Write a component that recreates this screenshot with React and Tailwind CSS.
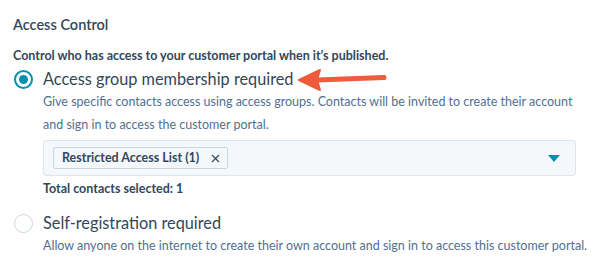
import React, { useState } from 'react';

const font = { fontFamily: 'Lato, "Open Sans", "Liberation Sans", sans-serif' };

const Radio = ({ checked, onClick }) => (
    <button
        type="button"
        onClick={onClick}
        className={`flex h-[19px] w-[19px] shrink-0 items-center justify-center rounded-full bg-white ${
            checked ? 'border-2 border-[#0091ae]' : 'border-[1.5px] border-[#cbd6e2]'
        }`}
    >
        {checked && <span className="h-[9px] w-[9px] rounded-full bg-[#0091ae]" />}
    </button>
);

const App = () => {
    const [access, setAccess] = useState('group');

    return (
        <div className="h-[267px] w-[600px] overflow-hidden bg-white pl-[13px] pt-[16px] text-[#33475b]" style={font}>
            <h2 className="text-[14.5px] font-semibold leading-[18px]">Access Control</h2>

            <p className="mt-[14px] text-[12.5px] font-bold leading-[16px] text-[#33475b]">
                Control who has access to your customer portal when it’s published.
            </p>

            {/* Access group option */}
            <div className="mt-[3px] flex h-[24px] items-center">
                <div className="ml-px">
                    <Radio checked={access === 'group'} onClick={() => setAccess('group')} />
                </div>
                <span className="ml-[10px] text-[16.3px] font-normal leading-[24px] text-[#33475b]">
                    Access group membership required
                </span>
                {/* annotation arrow */}
                <svg className="ml-[3px]" width="92" height="24" viewBox="0 0 92 24">
                    <path d="M 20 13 L 87 10.5" stroke="#ef5c3d" strokeWidth="5" strokeLinecap="round" fill="none" />
                    <path d="M 2 13 L 23 3 L 20 13 L 23 23 Z" fill="#ef5c3d" strokeLinejoin="round" stroke="#ef5c3d" strokeWidth="2" />
                </svg>
            </div>
            <p className="-mt-px ml-[30px] text-[12.5px] leading-[23px] text-[#516f90]">
                Give specific contacts access using access groups. Contacts will be invited to create their account
                <br />
                and sign in to access the customer portal.
            </p>

            {/* Access group select */}
            <div className="ml-[30px] mr-[24px] mt-[4px] flex h-[36px] items-center justify-between rounded-[3px] border border-[#dfe3eb] bg-[#f5f8fa] pl-[9px] pr-[15px]">
                <span className="flex h-[22px] items-center gap-[12px] rounded-[2px] border border-[#cbd6e2] bg-[#f5f8fa] pl-[8px] pr-[7px] text-[12.5px] font-bold text-[#33475b]">
                    Restricted Access List (1)
                    <svg width="9" height="9" viewBox="0 0 9 9">
                        <path d="M1 1 L8 8 M8 1 L1 8" stroke="#33475b" strokeWidth="1.2" />
                    </svg>
                </span>
                <svg width="12" height="7" viewBox="0 0 12 7">
                    <path d="M0 0 H12 L6 7 Z" fill="#0091ae" />
                </svg>
            </div>
            <p className="ml-[30px] mt-[5px] text-[12.5px] font-bold leading-[16px] text-[#33475b]">
                Total contacts selected: 1
            </p>

            {/* Self-registration option */}
            <div className="mt-[14px] flex h-[24px] items-center">
                <div className="ml-px">
                    <Radio checked={access === 'self'} onClick={() => setAccess('self')} />
                </div>
                <span className="ml-[10px] text-[16.3px] font-normal leading-[24px] text-[#33475b]">
                    Self-registration required
                </span>
            </div>
            <p className="ml-[30px] mt-px text-[12.5px] leading-[20px] text-[#516f90]">
                Allow anyone on the internet to create their own account and sign in to access this customer portal.
            </p>
        </div>
    );
};

export default App;
